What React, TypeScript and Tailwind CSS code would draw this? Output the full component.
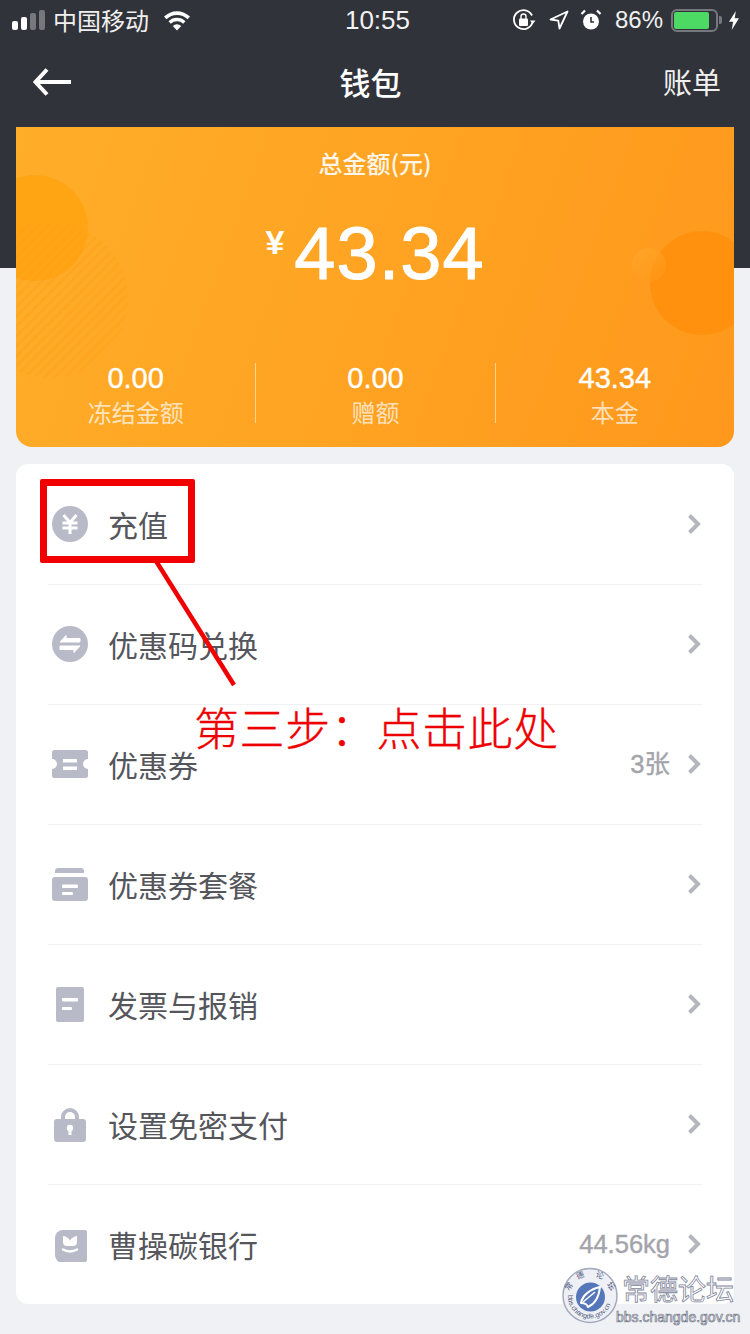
import React from 'react';

const cjk = "font-['Noto_Sans_CJK_SC','Liberation_Sans',sans-serif]";
const num = "font-['Liberation_Sans','Noto_Sans_CJK_SC',sans-serif]";

function Icon({ children }: { children: React.ReactNode }) {
    return (
        <svg width="36" height="36" viewBox="0 0 36 36" className="shrink-0">
            {children}
        </svg>
    );
}

const fill = '#b9bac8';

const YuanIcon = () => (
    <Icon>
        <circle cx="18" cy="18" r="18" fill={fill} />
        <path d="M11.500 9 18 16.500 24.500 9M10.500 17h15M10.500 22h15M18 16.500V28" fill="none" stroke="#fff" strokeWidth="3" />
    </Icon>
);

const ExchangeIcon = () => (
    <Icon>
        <circle cx="18" cy="18" r="18" fill={fill} />
        <path d="M8 16 14 9.500V12.500H28V16ZM28 20 22 26.500V23.500H8V20Z" fill="#fff" stroke="#fff" strokeWidth="1" strokeLinejoin="round" />
    </Icon>
);

const TicketIcon = () => (
    <Icon>
        <path d="M2.500 4h31a2.500 2.500 0 0 1 2.500 2.500v6.500a5 5 0 0 0 0 10v6.500a2.500 2.500 0 0 1-2.500 2.500h-31a2.500 2.500 0 0 1-2.500-2.500V23a5 5 0 0 0 0-10V6.500a2.500 2.500 0 0 1 2.500-2.500Z" fill={fill} />
        <rect x="11" y="13" width="14" height="3.500" fill="#fff" />
        <rect x="11" y="20.500" width="14" height="3.500" fill="#fff" />
    </Icon>
);

const PackageIcon = () => (
    <Icon>
        <path d="M3 7V5a3 3 0 0 1 3-3h23a3 3 0 0 1 3 3v2Z" fill={fill} />
        <rect x="0" y="11" width="36" height="24" rx="3" fill={fill} />
        <rect x="10" y="18.500" width="16" height="3.500" rx="1" fill="#fff" />
        <rect x="10" y="26" width="11" height="3" rx="1" fill="#fff" />
    </Icon>
);

const InvoiceIcon = () => (
    <Icon>
        <rect x="4" y="1" width="28" height="35" rx="2" fill={fill} />
        <rect x="10" y="12" width="16" height="3.500" rx="1" fill="#fff" />
        <rect x="10" y="21" width="10" height="3" rx="1" fill="#fff" />
    </Icon>
);

const LockIcon = () => (
    <Icon>
        <path d="M11 15V11a7 7 0 0 1 14 0v4" fill="none" stroke={fill} strokeWidth="4" />
        <rect x="2" y="13" width="32" height="23" rx="3" fill={fill} />
        <circle cx="18" cy="22" r="3.200" fill="#fff" />
        <rect x="16.500" y="22" width="3" height="7" fill="#fff" />
    </Icon>
);

const CarbonIcon = () => (
    <Icon>
        <path d="M11 4h22a2 2 0 0 1 2 2v27a4 4 0 0 1-4 4H11a8 8 0 0 1-8-8V12a8 8 0 0 1 8-8Z" fill={fill} />
        <path d="M11 10c3 .5 5.500 2 7 4.500 1.500-2.500 4-4 7-4.500v6a4 4 0 0 1-4 4h-6a4 4 0 0 1-4-4Z" fill="#fff" />
        <path d="M11 23.500c4 2.500 10 2.500 14 0" fill="none" stroke="#fff" strokeWidth="2.500" strokeLinecap="round" />
    </Icon>
);

function Chevron() {
    return (
        <svg width="14" height="22" viewBox="0 0 14 22" className="shrink-0">
            <path d="M2.500 2.500 11 11l-8.500 8.500" fill="none" stroke="#b5b6bd" strokeWidth="4" />
        </svg>
    );
}

const rows: { label: string; value?: string; icon: React.ReactNode }[] = [
    { label: '充值', icon: <YuanIcon /> },
    { label: '优惠码兑换', icon: <ExchangeIcon /> },
    { label: '优惠券', value: '3张', icon: <TicketIcon /> },
    { label: '优惠券套餐', icon: <PackageIcon /> },
    { label: '发票与报销', icon: <InvoiceIcon /> },
    { label: '设置免密支付', icon: <LockIcon /> },
    { label: '曹操碳银行', value: '44.56kg', icon: <CarbonIcon /> },
];

const stats = [
    { value: '0.00', label: '冻结金额' },
    { value: '0.00', label: '赠额' },
    { value: '43.34', label: '本金' },
];

function StatusBar() {
    return (
        <div className={`h-[40px] pl-[12px] pr-[10px] flex items-center justify-between text-white ${num}`}>
            <div className="w-[300px] flex items-center">
                <div className="flex items-end gap-[3px] h-[20px]">
                    <div className="w-[6px] h-[9px] rounded-[2px] bg-white" />
                    <div className="w-[6px] h-[13px] rounded-[2px] bg-white" />
                    <div className="w-[6px] h-[17px] rounded-[2px] bg-[#77787d]" />
                    <div className="w-[6px] h-[20px] rounded-[2px] bg-[#77787d]" />
                </div>
                <span className={`ml-[8px] text-[24px] leading-none text-[#f0f0f0] ${cjk}`}>中国移动</span>
                <svg width="28" height="21" viewBox="0 0 28 21" className="ml-[14px]">
                    <path d="M14 20.500 9.800 16a6 6 0 0 1 8.400 0ZM7.800 13.800 5.500 11.300a12.200 12.200 0 0 1 17 0l-2.300 2.500a9 9 0 0 0-12.400 0ZM3.500 9.200 1 6.600a18.500 18.500 0 0 1 26 0l-2.500 2.600a15 15 0 0 0-21 0Z" fill="#fff" />
                </svg>
            </div>
            <span className="ml-[3px] text-[26px] leading-none text-[#f2f2f2]">10:55</span>
            <div className="w-[300px] flex items-center justify-end">
                <svg width="24" height="24" viewBox="0 0 24 24">
                    <path d="M20.500 14.500A9.500 9.500 0 1 1 20 7.500" fill="none" stroke="#fff" strokeWidth="1.800" />
                    <path d="M18 12.500h5.500L20.700 16Z" fill="#fff" />
                    <rect x="7" y="10.500" width="9" height="7.500" rx="1" fill="#fff" />
                    <path d="M9 11V8.500a2.500 2.500 0 0 1 5 0V11" fill="none" stroke="#fff" strokeWidth="1.400" />
                </svg>
                <svg width="20" height="20" viewBox="0 0 20 20" className="ml-[13px]">
                    <path d="M18.500 1.500 10.500 18.500 9.300 10.700 1.500 9.500Z" fill="none" stroke="#fff" strokeWidth="1.800" strokeLinejoin="round" />
                </svg>
                <svg width="22" height="22" viewBox="0 0 22 22" className="ml-[11px]">
                    <circle cx="11" cy="12.500" r="8" fill="#fff" />
                    <path d="M11 8v5h3" fill="none" stroke="#31333a" strokeWidth="1.600" />
                    <path d="M1.500 5 5 1.500M20.500 5 17 1.500" stroke="#fff" strokeWidth="2.200" />
                </svg>
                <span className="ml-[13px] text-[24px] leading-none text-[#f0f0f0]">86%</span>
                <div className="ml-[8px] w-[47px] h-[23px] rounded-[6px] border-2 border-[#77787d] p-[1px]">
                    <div className="w-[86%] h-full rounded-[2px] bg-[#4cd964]" />
                </div>
                <div className="ml-[1px] w-[3px] h-[8px] rounded-r-[2px] bg-[#77787d]" />
                <svg width="12" height="19" viewBox="0 0 11 21" className="ml-[6px]">
                    <path d="M7.500 0 0 12h4.500L3 21l8-13H6.300Z" fill="#fff" />
                </svg>
            </div>
        </div>
    );
}

const sealChars = [
    { c: '常', x: 9, y: 21, r: -52 },
    { c: '德', x: 19, y: 11, r: -18 },
    { c: '论', x: 37, y: 11, r: 18 },
    { c: '坛', x: 47, y: 21, r: 52 },
];

function Watermark() {
    return (
        <div className="absolute left-[562px] top-[1267px] w-[180px] h-[60px] flex pointer-events-none">
            <svg width="58" height="58" viewBox="0 0 58 58" className="shrink-0 overflow-visible">
                <circle cx="28" cy="28.500" r="27" fill="#eef0f6" stroke="#a3a9bd" strokeWidth="1.500" />
                <circle cx="28.500" cy="30" r="14.500" fill="#5577b9" />
                <path d="M19 36c1-7 9-14 19-16-1 9-5 17-12 20-1-3-3-4-7-4Z" fill="none" stroke="#fff" strokeWidth="2" strokeLinejoin="round" />
                <path d="M21 35 33 25" stroke="#fff" strokeWidth="1.500" />
                <defs>
                    <path id="wm-bottom" d="M6 28a22 22 0 0 0 44 3" />
                </defs>
                {sealChars.map((s) => (
                    <text key={s.c} x={s.x} y={s.y} fontSize="8" textAnchor="middle" fill="#4f5a7a" fontFamily="'Noto Sans CJK SC', sans-serif" transform={`rotate(${s.r} ${s.x} ${s.y})`}>
                        {s.c}
                    </text>
                ))}
                <text fontSize="7" fill="#4f5a7a" fontFamily="'Liberation Sans', sans-serif">
                    <textPath href="#wm-bottom">bbs.changde.gov.cn</textPath>
                </text>
            </svg>
            <div className="flex flex-col items-start -ml-[1px]">
                <span className={`text-[28px] leading-[36px] mt-[3px] pl-[3px] text-white [-webkit-text-stroke:0.8px_#80869a] ${cjk}`}>常德论坛</span>
                <span className={`-ml-[3px] mt-[3px] text-[14px] leading-[16px] text-white [-webkit-text-stroke:0.7px_#707688] ${num}`}>bbs.changde.gov.cn</span>
            </div>
        </div>
    );
}

export default function App() {
    return (
        <div className={`relative w-[750px] h-[1334px] overflow-hidden bg-[#eff1f4] ${cjk}`}>
            <div className="absolute inset-x-0 top-0 h-[268px] bg-[#31333a]" />

            <div className="relative">
                <StatusBar />

                <div className="h-[87px] pb-[4px] pl-[32px] pr-[29px] grid grid-cols-3 items-center text-white">
                    <svg width="40" height="30" viewBox="0 0 40 30">
                        <path d="M15 2.500 3.500 15 15 27.500M4 15h35" fill="none" stroke="#fff" strokeWidth="4" />
                    </svg>
                    <div className="pr-[12px] text-center text-[31px] leading-none font-medium">钱包</div>
                    <div className="text-right text-[29px] leading-none text-[#f0f0f0]">账单</div>
                </div>

                <div className="relative mx-[16px] h-[320px] overflow-hidden rounded-b-[16px] bg-[linear-gradient(110deg,#ffae29,#ff981c)] text-white">
                    <svg width="718" height="320" viewBox="0 0 718 320" className="absolute inset-0">
                        <defs>
                            <pattern id="hatch" width="7" height="7" patternUnits="userSpaceOnUse" patternTransform="rotate(45)">
                                <rect width="2.500" height="7" fill="#ff9a12" opacity="0.3" />
                            </pattern>
                            <linearGradient id="dot" x1="0" y1="0" x2="0.800" y2="1">
                                <stop offset="0" stopColor="#ffa62c" />
                                <stop offset="1" stopColor="#ff9a18" stopOpacity="0.4" />
                            </linearGradient>
                        </defs>
                        <circle cx="19" cy="101" r="53" fill="#ffa514" />
                        <circle cx="34" cy="173" r="78" fill="url(#hatch)" />
                        <circle cx="686" cy="156" r="52" fill="#ff910f" />
                        <circle cx="633" cy="138" r="17" fill="url(#dot)" />
                    </svg>

                    <div className="relative">
                        <div className="pt-[20px] text-center text-[24px] leading-[36px] font-medium text-white/90 -mt-[2px]">总金额(元)</div>
                        <div className={`mt-[23px] h-[100px] flex justify-center items-center ${num}`}>
                            <span className="mr-[10px] mb-[24px] text-[34px] leading-none font-bold">¥</span>
                            <span className="text-[74px] leading-none tracking-[1px] [-webkit-text-stroke:1px_#fff]">43.34</span>
                        </div>
                        <div className="mt-[59px] grid grid-cols-3 h-[60px]">
                            {stats.map((s, i) => (
                                <div key={s.label} className={`flex flex-col items-center ${i > 0 ? 'border-l border-white/50' : ''}`}>
                                    <span className={`text-[29px] leading-[30px] [-webkit-text-stroke:0.4px_#fff] ${num}`}>{s.value}</span>
                                    <span className="mt-[9px] text-[24px] leading-[20px] text-white/70">{s.label}</span>
                                </div>
                            ))}
                        </div>
                    </div>
                </div>

                <div className="mx-[16px] mt-[17px] rounded-[12px] bg-white pl-[32px] pr-[31px]">
                    {rows.map((r, i) => (
                        <div key={r.label} className={`h-[120px] pl-[4px] pr-[2px] flex items-center ${i > 0 ? 'border-t border-[#f1f2f4] pb-[2px]' : ''}`}>
                            {r.icon}
                            <span className="ml-[20px] flex-1 text-[30px] leading-none text-[#55565c]">{r.label}</span>
                            {r.value && <span className={`mr-[17px] mt-[2px] text-[25.500px] leading-none text-[#a3a4ab] [-webkit-text-stroke:0.4px_#a3a4ab] ${num}`}>{r.value}</span>}
                            <Chevron />
                        </div>
                    ))}
                </div>
            </div>

            {/* annotation drawn over the screenshot */}
            <div className="absolute left-[40px] top-[479px] w-[155px] h-[84px] rounded-[2px] border-[7px] border-[#f20000]" />
            <svg width="750" height="1334" className="absolute inset-0 pointer-events-none">
                <path d="M156 561 234 685" stroke="#f00000" strokeWidth="4.500" />
            </svg>
            <div className="absolute left-[194px] top-[697px] text-[45px] leading-[60px] tracking-[0.6px] whitespace-nowrap font-light text-[#ee0000] [-webkit-text-stroke:0.3px_#ee0000]">第三步：点击此处</div>

            <Watermark />
        </div>
    );
}
